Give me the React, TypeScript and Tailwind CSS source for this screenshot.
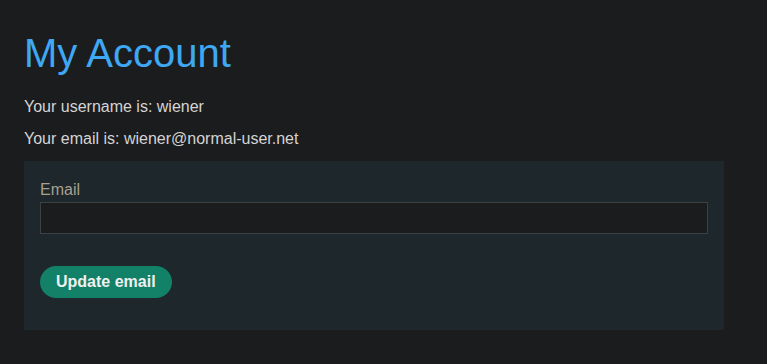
export default function App() {
  return (
    <main className="min-h-screen bg-[#1b1c1e] px-6 pt-[29px] font-['Liberation_Sans',Arial,sans-serif]">
      <h1 className="text-[40px] leading-[48px] text-[#3fa8f4]">My Account</h1>
      <p className="mt-[18px] text-base leading-6 text-[#d4d4d4]">Your username is: wiener</p>
      <p className="mt-2 text-base leading-6 text-[#d4d4d4]">Your email is: wiener@normal-user.net</p>

      <form
        className="mt-[10px] flex w-[700px] flex-col bg-[#1e272b] px-4 pt-[17px] pb-8"
        onSubmit={(event) => event.preventDefault()}
      >
        <label className="text-base leading-6 text-[#a89f90]">Email</label>
        <input
          type="email"
          name="email"
          className="h-8 w-full border border-[#3c4244] bg-[#1b1c1e] px-2 text-base text-[#d4d4d4] outline-none"
        />
        <div className="mt-8">
          <button
            type="submit"
            className="h-8 rounded-full bg-[#138068] px-4 text-base font-bold text-[#f0f0f0]"
          >
            Update email
          </button>
        </div>
      </form>
    </main>
  );
}
